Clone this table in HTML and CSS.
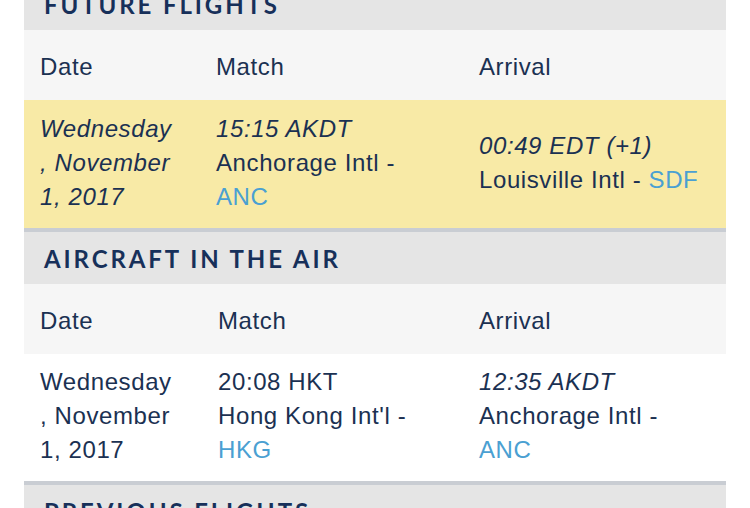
FILE: index.html
```html
<!DOCTYPE html>
<html lang="en">
<head>
<meta charset="utf-8">
<title>Flights</title>
<link rel="stylesheet" href="styles.css">
</head>
<body>
<main class="page">
  <section class="flights">
    <h2 class="section-title">FUTURE FLIGHTS</h2>
    <table class="flight-table">
      <colgroup><col class="c-date"><col class="c-match"><col class="c-arr"></colgroup>
      <thead>
        <tr><th>Date</th><th>Match</th><th>Arrival</th></tr>
      </thead>
      <tbody>
        <tr class="highlight">
          <td><em>Wednesday<br>, November<br>1, 2017</em></td>
          <td><em>15:15 AKDT</em><br>Anchorage Intl -<br><a class="code">ANC</a></td>
          <td><em>00:49 EDT (+1)</em><br>Louisville Intl - <a class="code">SDF</a></td>
        </tr>
      </tbody>
    </table>
  </section>

  <section class="flights">
    <h2 class="section-title">AIRCRAFT IN THE AIR</h2>
    <table class="flight-table alt">
      <colgroup><col class="c-date"><col class="c-match"><col class="c-arr"></colgroup>
      <thead>
        <tr><th>Date</th><th>Match</th><th>Arrival</th></tr>
      </thead>
      <tbody>
        <tr>
          <td>Wednesday<br>, November<br>1, 2017</td>
          <td>20:08 HKT<br>Hong Kong Int'l -<br><a class="code">HKG</a></td>
          <td><em>12:35 AKDT</em><br>Anchorage Intl -<br><a class="code">ANC</a></td>
        </tr>
      </tbody>
    </table>
  </section>

  <section class="flights">
    <h2 class="section-title">PREVIOUS FLIGHTS</h2>
  </section>
</main>
</body>
</html>
```

FILE: styles.css
```css
html, body {
  margin: 0;
  padding: 0;
  background: #ffffff;
}

body {
  padding: 0 24px;
  font-family: "Liberation Sans", Arial, Helvetica, sans-serif;
  color: #1b3152;
  overflow: hidden;
  height: 508px;
}

.page {
  margin-top: -22px;
}

.flights {
  border-bottom: 4px solid #c9cdd3;
}

.section-title {
  margin: 0;
  padding: 1px 20px 0;
  height: 51px;
  line-height: 52px;
  background: #e5e5e5;
  font-family: Lato, "Open Sans", sans-serif;
  font-weight: 700;
  font-size: 24px;
  letter-spacing: 2.9px;
  color: #17305a;
}

.flight-table {
  width: 100%;
  border-collapse: collapse;
  table-layout: fixed;
  font-size: 24px;
  line-height: 34px;
  letter-spacing: 0.6px;
}

.c-date { width: 176px; }
.c-match { width: 263px; }
.c-arr { width: 263px; }

.alt .c-date { width: 178px; }
.alt .c-match { width: 261px; }

.flight-table th {
  text-align: left;
  font-weight: 400;
  background: #f6f6f6;
  padding: 20px 4px 16px 16px;
  vertical-align: middle;
}

.flight-table td {
  padding: 12px 4px 14px 16px;
  vertical-align: middle;
  background: #ffffff;
}

.alt td {
  padding: 11px 4px 14px 16px;
}

.flight-table .highlight td {
  background: #f8eaa6;
}

.flight-table em {
  font-style: italic;
}

.code {
  color: #4aa0d2;
  text-decoration: none;
}
```
